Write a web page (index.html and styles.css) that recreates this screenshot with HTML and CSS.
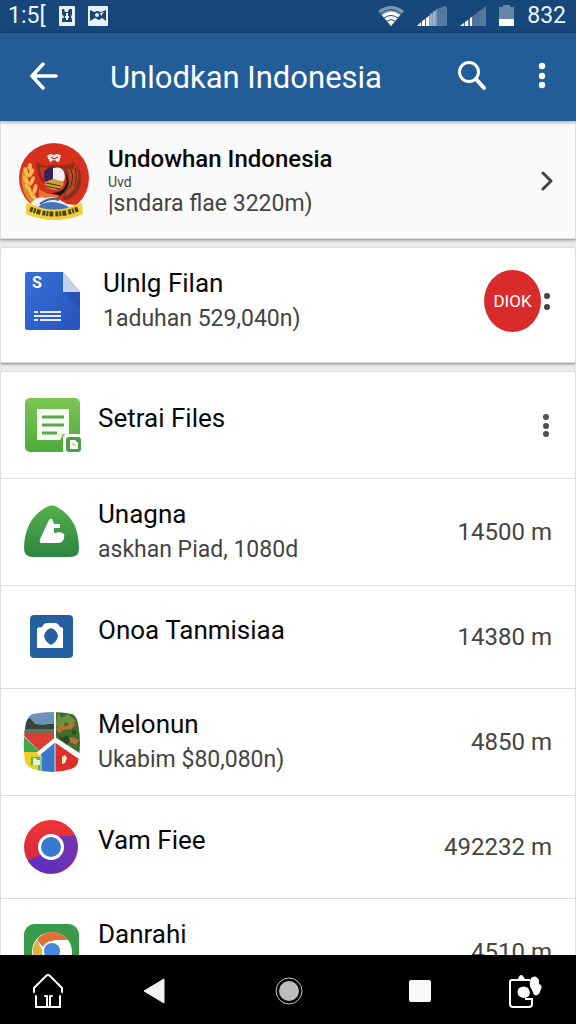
FILE: index.html
```
<!DOCTYPE html>
<html lang="id">
  <head>
    <meta charset="utf-8">
    <meta name="viewport" content="width=device-width, initial-scale=1">
    <title>Unlodkan Indonesia</title>
    <link rel="stylesheet" href="styles.css">
  </head>
  <body>
    <div class="statusBar">
      <span class="statusText">1:5[</span>
      <svg width="16" height="20" viewBox="0 0 16 20">
        <rect width="16" height="20" rx="1" fill="#e6f2fc"/>
        <path d="M3 3h2l1 3h3l1-3h3v5l-1 3 1 2v3H3v-3l2-2-2-3z" fill="#1d436e"/>
        <path d="M7 7h2v3h1v2H9v2H7v-2H6v-2h1z" fill="#e6f2fc"/>
      </svg>
      <svg width="20" height="20" viewBox="0 0 20 20">
        <rect width="20" height="20" rx="1" fill="#e6f2fc"/>
        <path d="M2 4l4 2 3-1 4 1 5-2v11l-4-3-3 2-4-2-5 3z" fill="#1d436e"/>
        <circle cx="9" cy="9" r="2" fill="#e6f2fc"/>
        <path d="M12 7l4-1-3 4z" fill="#e6f2fc"/>
      </svg>
      <div class="statusRight">
        <svg width="26" height="20" viewBox="0 0 26 20">
          <path d="M0 5Q13-5 26 5L13 20z" fill="#7898ba"/>
          <path d="M4 9Q13 2 22 9L13 20z" fill="#fff"/>
          <path d="M2 8Q13-1 24 8M6 12Q13 7 20 12M9 15q4-3 8 0" fill="none" stroke="#1d4c7e" stroke-width="1"/>
        </svg>
        <svg width="30" height="20" viewBox="0 0 30 20">
          <path d="M0 20L20 3l8-3q2 0 2 3v17z" fill="#55799f"/>
          <path d="M11 11l9-8v17h-9z" fill="#7f9dbc"/>
          <path d="M0 20l4-4v4zM5 15l3-2v7H5zM9 12l3-2v10H9z" fill="#fff"/>
          <path d="M14 7v13M17 5v15" stroke="#b4c8db" stroke-width="1"/>
          <path d="M20 3l9 5" stroke="#426b94" stroke-width="1"/>
        </svg>
        <svg width="26" height="20" viewBox="0 0 26 20">
          <path d="M0 20L26 0v20z" fill="#55799f"/>
          <path d="M0 20l4-3v3zM5 16l3-2v6H5zM10 12l2-1v9h-2z" fill="#fff"/>
          <path d="M14 9v11M18 6v14" stroke="#426b94" stroke-width="1"/>
        </svg>
        <svg width="15" height="21" viewBox="0 0 15 21">
          <path d="M0 2h4V0h7v2h4v12H0z" fill="#6787aa"/>
          <path d="M0 14h15v7H0z" fill="#fff"/>
        </svg>
        <span class="statusText">832</span>
      </div>
    </div>

    <header class="appBar">
      <button class="iconButton" aria-label="Back">
        <svg width="30" height="28" viewBox="0 0 30 28">
          <path d="M14 2L3 14l11 12M3 14h24" fill="none" stroke="#fff" stroke-width="3.500" stroke-linecap="round" stroke-linejoin="round"/>
        </svg>
      </button>
      <h1 class="appTitle">Unlodkan Indonesia</h1>
      <button class="iconButton searchButton" aria-label="Search">
        <svg width="30" height="30" viewBox="0 0 30 30">
          <circle cx="12" cy="11" r="9.500" fill="none" stroke="#fff" stroke-width="3"/>
          <path d="M19 18l8 9" stroke="#fff" stroke-width="4" stroke-linecap="round"/>
        </svg>
      </button>
      <button class="iconButton" aria-label="More">
        <svg width="8" height="28" viewBox="0 0 8 28">
          <circle cx="4" cy="4" r="3.200" fill="#fff"/>
          <circle cx="4" cy="14" r="3.200" fill="#fff"/>
          <circle cx="4" cy="23" r="3.200" fill="#fff"/>
        </svg>
      </button>
    </header>

    <main class="content">
      <section class="card profileCard">
        <svg width="72" height="80" viewBox="0 0 72 80">
          <circle cx="36" cy="37" r="35" fill="#d7301d"/>
          <path d="M16 65Q1 52 4 31l6-7q-3 22 14 39z" fill="#de8a2a"/>
          <g fill="#f0bd4c">
            <ellipse cx="8" cy="31" rx="2" ry="5" transform="rotate(-20 8 31)"/>
            <ellipse cx="13" cy="32" rx="2" ry="5" transform="rotate(30 13 32)"/>
            <ellipse cx="8" cy="39" rx="2" ry="5" transform="rotate(-30 8 39)"/>
            <ellipse cx="14" cy="40" rx="2" ry="5" transform="rotate(25 14 40)"/>
            <ellipse cx="10" cy="47" rx="2" ry="5" transform="rotate(-35 10 47)"/>
            <ellipse cx="17" cy="48" rx="2" ry="5" transform="rotate(15 17 48)"/>
            <ellipse cx="15" cy="55" rx="2" ry="5" transform="rotate(-40 15 55)"/>
            <ellipse cx="12" cy="26" rx="2" ry="4"/>
          </g>
          <path d="M18 20q7 7 14 4h8q9 2 15-3 11 9 7 25-5 12-18 14l2-8q7-11-1-21-7-6-13-2-7 4-6 14-8-9-8-23z" fill="#8e2f1a"/>
          <path d="M22 26q7 2 11-1l-5 5q-3 3-2 9-4-6-4-13z" fill="#d7301d"/>
          <path d="M49 27q7 5 8-4 6 11 1 21-4 9-12 11 9-13 3-28z" fill="#b94c22"/>
          <path d="M53 29q4 9-2 19M57 27q3 9-1 18" fill="none" stroke="#671d16" stroke-width="1"/>
          <path d="M26 31q4-6 10-5v12l-9 3-1-6z" fill="#35225f"/>
          <path d="M35 27q9-2 11 4t-1 10l-10-3z" fill="#f2eee9"/>
          <path d="M27 41l8-3 11 4q-2 7-10 7l-9-3z" fill="#c8a236"/>
          <path d="M28 42l15 3M27 45l15 3" stroke="#423018" stroke-width="1"/>
          <path d="M47 31q4 9-1 16-4 5-13 5l9 3q14-11 5-24z" fill="#1b171b"/>
          <path d="M21 48q8 6 20 6l-5 6-15-2z" fill="#e7772e"/>
          <path d="M29 15l3-2 4 1 3-1 4 1-2 7-5-1-4 1z" fill="#f8e3d9"/>
          <path d="M33 16l3 2 4-2M34 20h4" fill="none" stroke="#612019" stroke-width="1"/>
          <path d="M12 63q7-9 15-6l7-1 8 3 7 4 9 1-3 5-18 4-20-3z" fill="#f5efed"/>
          <path d="M21 65q11-8 28 0l3 2-13 5-17-2z" fill="#4376b9"/>
          <path d="M22 63q9-7 19-4" fill="none" stroke="#3d5da5" stroke-width="2"/>
          <path d="M8 62l5 1q23 11 47 0l4-1 1 11q-28 12-57 0z" fill="#f0cf39"/>
          <path d="M12 68q24 10 48 0" fill="none" stroke="#50420f" stroke-width="5" stroke-dasharray="3 1 2 1 4 2"/>
        </svg>
        <div class="itemText">
          <h2 class="itemTitle strong">Undowhan Indonesia</h2>
          <p class="itemNote">Uvd</p>
          <p class="itemSub">|sndara flae 3220m)</p>
        </div>
        <button class="iconButton" aria-label="Open">
          <svg width="12" height="20" viewBox="0 0 12 20">
            <path d="M2 2l8 8-8 8" fill="none" stroke="#444" stroke-width="3" stroke-linecap="round" stroke-linejoin="round"/>
          </svg>
        </button>
      </section>

      <section class="card fileCard">
        <svg width="56" height="60" viewBox="0 0 56 60">
          <defs>
            <linearGradient id="sheetBlue" x1="0" y1="0" x2="1" y2="1">
              <stop offset="0" stop-color="#386fd8"/>
              <stop offset="1" stop-color="#2555bc"/>
            </linearGradient>
          </defs>
          <path d="M3 1h36l17 20v36q0 2-2 2H3q-2 0-2-2V3q0-2 2-2z" fill="url(#sheetBlue)"/>
          <path d="M39 21h17v17z" fill="#214cac" opacity=".6"/>
          <path d="M39 1l17 20H39z" fill="#c6d2e9"/>
          <text x="8" y="17" class="sheetLetter">S</text>
          <path d="M10 40h4v2h-4zM16 40h21v2H16zM10 44h27v2H10zM10 48h4v2h-4zM16 48h21v2H16z" fill="#e7effd"/>
        </svg>
        <div class="itemText">
          <h2 class="itemTitle">Ulnlg Filan</h2>
          <p class="itemSub">1aduhan 529,040n)</p>
        </div>
        <div class="badgeGroup">
          <span class="badge">DIOK</span>
          <button class="iconButton" aria-label="More">
            <svg width="8" height="20" viewBox="0 0 8 20">
              <circle cx="4" cy="5" r="3" fill="#444"/>
              <circle cx="4" cy="16" r="3" fill="#444"/>
            </svg>
          </button>
        </div>
      </section>

      <section class="card listCard">
        <div class="row sectionRow">
          <svg width="58" height="56" viewBox="0 0 58 56">
            <defs>
              <linearGradient id="noteGreen" x1="0" y1="0" x2="0" y2="1">
                <stop offset="0" stop-color="#7cc653"/>
                <stop offset="1" stop-color="#4daa3d"/>
              </linearGradient>
            </defs>
            <rect x="2" y="1" width="55" height="54" rx="5" fill="url(#noteGreen)"/>
            <path d="M14 12h32v25h-6l-3 6H14z" fill="#f5fff0"/>
            <path d="M19 20h22M19 28h22M19 36h15" stroke="#5ba54a" stroke-width="3"/>
            <path d="M40 41q0-4 4-4h14v19H40z" fill="#fff"/>
            <rect x="43" y="40" width="15" height="15" rx="3" fill="#4c9d4c"/>
            <path d="M47 43h5l3 3v6h-8z" fill="#fff"/>
            <path d="M50 45v3h3" fill="none" stroke="#91bf88" stroke-width="1"/>
          </svg>
          <div class="itemText single">
            <h2 class="itemTitle">Setrai Files</h2>
          </div>
          <button class="iconButton" aria-label="More">
            <svg width="12" height="24" viewBox="0 0 12 24">
              <circle cx="6" cy="4" r="3" fill="#505050"/>
              <circle cx="6" cy="13" r="3" fill="#505050"/>
              <circle cx="6" cy="21" r="3" fill="#505050"/>
            </svg>
          </button>
        </div>

        <div class="row">
          <svg width="58" height="56" viewBox="0 0 58 56">
            <defs>
              <linearGradient id="hillGreen" x1="0" y1="0" x2="0" y2="1">
                <stop offset="0" stop-color="#54b04c"/>
                <stop offset="1" stop-color="#2c8541"/>
              </linearGradient>
            </defs>
            <path d="M26 2q3-1 6 0 13 6 20 20 4 11 4 23 0 8-9 8H10q-9 0-9-9 0-12 5-23Q12 8 26 2z" fill="url(#hillGreen)"/>
            <path d="M26 16q3-3 4 1l1 3h6v4h-6v5q3 0 4-1 8 0 6 6-1 5-6 5H18q-2-1-1-4z" fill="#fff"/>
          </svg>
          <div class="itemText">
            <h2 class="itemTitle">Unagna</h2>
            <p class="itemSub">askhan Piad, 1080d</p>
          </div>
          <span class="itemValue">14500 m</span>
        </div>

        <div class="row">
          <svg width="58" height="44" viewBox="0 0 58 44">
            <rect x="7" y="0" width="43" height="43" rx="4" fill="#2660a1"/>
            <path d="M14 14q0-2 5-2 2-4 5-4h8q3 0 5 4 3 0 3 2v19H14z" fill="#fff"/>
            <path d="M28 13q6 2 7 8-1 6-7 9-6-3-7-9 1-6 7-8z" fill="#2660a1"/>
          </svg>
          <div class="itemText single">
            <h2 class="itemTitle">Onoa Tanmisiaa</h2>
          </div>
          <span class="itemValue">14380 m</span>
        </div>

        <div class="row">
          <svg width="58" height="62" viewBox="0 0 58 62">
            <defs>
              <clipPath id="mapShape">
                <path d="M10 3Q29-1 49 3q4 1 6 9 4 22 0 39-1 5-7 7-19 6-38 0-6-2-8-8-3-20 1-38 2-8 7-9z"/>
              </clipPath>
            </defs>
            <g clip-path="url(#mapShape)">
              <path d="M0 0h32v22H0z" fill="#6c91ba"/>
              <path d="M0 12l7-5 5 6 8 1 5-1h7v7H0z" fill="#36463c"/>
              <path d="M0 18h32v4H0z" fill="#6e7054"/>
              <path d="M32 0h26v43L32 26z" fill="#416d2c"/>
              <path d="M35 2l4 5 6-4 8 7-5 4-5-3-5 6-6-2z" fill="#649243"/>
              <path d="M33 18l6-5 4 3 5-5 5 2-5 5-8 1-4 3zM43 29l6-3 7 3-3 5z" fill="#bc6f38"/>
              <path d="M35 24l4 3 5-3 3 5-3 5-7-6zM50 18l4 4-5 2z" fill="#264d22"/>
              <path d="M0 22h32v6L17 41 0 24z" fill="#da3f36"/>
              <path d="M0 25l17 16H0z" fill="#3aa94e"/>
              <path d="M0 41h18v21H0z" fill="#ecd022"/>
              <path d="M8 46h10v16h-3V54H8z" fill="#57b65f"/>
              <path d="M18 42l14-12v32H18z" fill="#3977c9"/>
              <path d="M32 30l26 17v15H32z" fill="#dc302c"/>
              <path d="M15 43l17-14 26 18" fill="none" stroke="#fff" stroke-width="4"/>
              <path d="M32 0v29" stroke="#fff" stroke-width="2"/>
              <path d="M32 32v30M18 44v18" stroke="#d7e6ed" stroke-width="1"/>
              <path d="M10 47h3l1 2h3v5h-7zM39 46l3-2 2 3-2 5-3 1z" fill="#f7eec8"/>
            </g>
          </svg>
          <div class="itemText">
            <h2 class="itemTitle">Melonun</h2>
            <p class="itemSub">Ukabim $80,080n)</p>
          </div>
          <span class="itemValue">4850 m</span>
        </div>

        <div class="row">
          <svg width="58" height="56" viewBox="0 0 58 56">
            <defs>
              <linearGradient id="ringRed" x1="0" y1="0" x2="0" y2="1">
                <stop offset="0" stop-color="#ef3431"/>
                <stop offset="1" stop-color="#cf2649"/>
              </linearGradient>
              <linearGradient id="ringPurple" x1="1" y1="0" x2="0" y2="1">
                <stop offset="0" stop-color="#7636ad"/>
                <stop offset="1" stop-color="#5b2dc2"/>
              </linearGradient>
            </defs>
            <circle cx="28" cy="28" r="27" fill="url(#ringRed)"/>
            <path d="M28 17h24.600A27 27 0 0 1 5 42l16-8z" fill="url(#ringPurple)"/>
            <circle cx="28" cy="28" r="13" fill="#fff"/>
            <circle cx="28" cy="28" r="10" fill="#3b79d1"/>
          </svg>
          <div class="itemText single">
            <h2 class="itemTitle">Vam Fiee</h2>
          </div>
          <span class="itemValue">492232 m</span>
        </div>

        <div class="row lastRow">
          <svg width="58" height="58" viewBox="0 0 58 58">
            <rect x="1" y="1" width="55" height="56" rx="11" fill="#389b49"/>
            <circle cx="29" cy="29" r="20" fill="#fff"/>
            <path d="M14 17a19 19 0 0 1 31 0H31l-10 8z" fill="#e66d37"/>
            <path d="M14 17l7 14 7 18A20 20 0 0 1 14 17z" fill="#e2b13b"/>
            <circle cx="29" cy="28" r="10" fill="#fff"/>
            <circle cx="29" cy="28" r="8" fill="#4289dd"/>
          </svg>
          <div class="itemText">
            <h2 class="itemTitle">Danrahi</h2>
          </div>
          <span class="itemValue">4510 m</span>
        </div>
      </section>
    </main>

    <nav class="navBar">
      <button class="iconButton" aria-label="Home">
        <svg width="32" height="36" viewBox="0 0 32 36">
          <path d="M2 19v-4L14 3q2-2 4 0l12 12v4M4 23v11h24V23M15 23v11M18 23v11M13 23h2M18 23h2" fill="none" stroke="#fff" stroke-width="2" stroke-linecap="round"/>
        </svg>
      </button>
      <button class="iconButton" aria-label="Back">
        <svg width="22" height="26" viewBox="0 0 22 26">
          <path d="M21 1v24L1 13z" fill="#f2f2f2" stroke="#f2f2f2" stroke-linejoin="round"/>
        </svg>
      </button>
      <button class="iconButton" aria-label="Circle">
        <svg width="28" height="28" viewBox="0 0 28 28">
          <circle cx="14" cy="14" r="13" fill="none" stroke="#c4c4c4" stroke-width="1"/>
          <circle cx="14" cy="14" r="10" fill="#bdbdbd"/>
        </svg>
      </button>
      <button class="iconButton" aria-label="Recent">
        <svg width="22" height="24" viewBox="0 0 22 24">
          <rect y="1" width="22" height="22" rx="2" fill="#f8f8f8"/>
        </svg>
      </button>
      <button class="iconButton" aria-label="Screenshot">
        <svg width="34" height="36" viewBox="0 0 34 36">
          <path d="M22 7H4Q2 7 2 9v22q0 3 3 3h16q3 0 3-3v-5h-7" fill="none" stroke="#fff" stroke-width="2"/>
          <path d="M10 6q2-6 5-3l2 3zM11 15q5-3 9 0 3 4 1 8-5 4-10 0-3-4 0-8z" fill="#fff"/>
          <path d="M23 5q5-4 8 2v4q4 1 2 5-2 8-7 6l-2-5q-4-5-1-12z" fill="#fff"/>
        </svg>
      </button>
    </nav>
  </body>
</html>
```
FILE: styles.css
```
  * {
    box-sizing: border-box;
  }

  body {
    margin: 0;
    height: 100vh;
    display: flex;
    flex-direction: column;
    overflow: hidden;
    font-family: Roboto, "Liberation Sans", sans-serif;
    background-color: #ececec;
    color: #080808;
  }

  h1, h2, p {
    margin: 0;
    font-weight: 400;
  }

  svg {
    display: block;
    flex-shrink: 0;
  }

  .iconButton {
    padding: 0;
    border: none;
    background: none;
    flex-shrink: 0;
    cursor: pointer;
  }

  /* status bar */
  .statusBar {
    height: 33px;
    flex-shrink: 0;
    display: flex;
    align-items: center;
    gap: 13px;
    padding: 0 10px 2px 8px;
    background-color: #17477b;
    color: #edf6ff;
  }

  .statusText {
    font-size: 23px;
    line-height: 28px;
  }

  .statusRight {
    display: flex;
    align-items: center;
    gap: 13px;
    margin-left: auto;
  }

  /* blue title bar */
  .appBar {
    height: 88px;
    flex-shrink: 0;
    display: flex;
    align-items: center;
    padding: 0 30px 2px 29px;
    background-color: #235d98;
    color: #fff;
    box-shadow: 0 1px 4px rgba(0, 0, 0, 0.4);
    z-index: 1;
  }

  .appTitle {
    flex: 1;
    margin-left: 51px;
    padding-top: 3px;
    font-size: 31px;
    line-height: 40px;
    white-space: nowrap;
  }

  .searchButton {
    margin-right: 51px;
  }

  /* cards */
  .content {
    flex: 1;
    min-height: 0;
    overflow: hidden;
    display: flex;
    flex-direction: column;
    gap: 9px;
  }

  .card {
    flex-shrink: 0;
    background-color: #fff;
    border: 1px solid #dedede;
    border-top: none;
    box-shadow: 0 1px 3px rgba(0, 0, 0, 0.45);
  }

  .profileCard {
    min-height: 118px;
    display: flex;
    align-items: center;
    gap: 18px;
    padding: 2px 22px 0 17px;
    background-color: #fafafa;
  }

  .fileCard {
    min-height: 115px;
    display: flex;
    align-items: center;
    gap: 23px;
    padding: 0 24px 8px 23px;
    border-radius: 2px;
  }

  .listCard {
    border-radius: 2px;
  }

  .row {
    min-height: 103px;
    display: flex;
    align-items: center;
    gap: 17px;
    padding: 18px 23px 18px 22px;
    border-bottom: 1px solid #dcdcdc;
  }

  .sectionRow, .lastRow {
    min-height: 107px;
  }

  .lastRow .itemText {
    align-self: flex-start;
  }

  .itemText {
    flex: 1;
    min-width: 0;
    white-space: nowrap;
  }

  .single {
    padding-bottom: 14px;
  }

  .itemTitle {
    font-size: 26px;
    line-height: 35px;
  }

  .strong {
    font-weight: 500;
    font-size: 24px;
    line-height: 30px;
  }

  .itemNote {
    font-size: 14px;
    line-height: 16px;
    color: #444;
  }

  .itemSub {
    font-size: 23px;
    line-height: 35px;
    color: #444;
  }

  .profileCard .itemSub {
    line-height: 28px;
  }

  .itemValue {
    font-size: 24px;
    line-height: 35px;
    color: #444;
  }

  .sheetLetter {
    font-size: 16px;
    font-weight: 700;
    fill: #fff;
  }

  /* red badge with the menu dots beside it */
  .badgeGroup {
    display: flex;
    align-items: center;
    gap: 2px;
  }

  .badge {
    width: 57px;
    height: 62px;
    display: flex;
    justify-content: center;
    align-items: center;
    border-radius: 50%;
    background-color: #d92b2b;
    color: #fff;
    font-size: 17px;
  }

  /* bottom navigation */
  .navBar {
    height: 69px;
    flex-shrink: 0;
    display: grid;
    grid-template-columns: 96fr 116fr 154fr 108fr 102fr;
    align-items: center;
    justify-items: center;
    padding-top: 3px;
    background-color: #000;
    z-index: 1;
  }
```
